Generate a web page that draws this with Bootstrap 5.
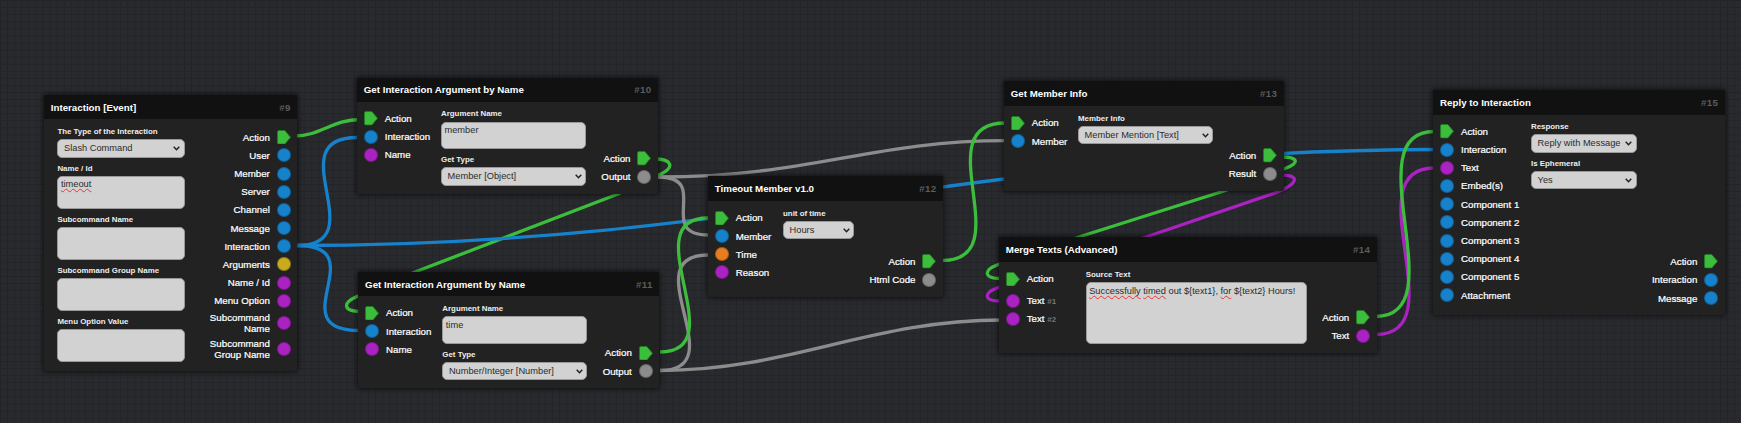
<!DOCTYPE html>
<html lang="en">
<head>
<meta charset="utf-8">
<meta name="viewport" content="width=device-width, initial-scale=1">
<title>Node editor</title>
<link href="https://cdn.jsdelivr.net/npm/bootstrap@5.3.0/dist/css/bootstrap.min.css" rel="stylesheet">
<style>
html,body{height:100%}
body{background:#28292d;font-family:"Liberation Sans",Arial,sans-serif;color:#fff;font-size:9.72px;line-height:11px}
.board{height:100vh;background-color:#292a2e;background-image:linear-gradient(to right,#232428 1px,transparent 1px),linear-gradient(to bottom,#232428 1px,transparent 1px);background-size:7.08px 7.08px}
.wires{left:0;top:0;fill:none;stroke-width:3.3}
.g{stroke:#3cbe3c}.b{stroke:#1682cb}.p{stroke:#aa22c2}.s{stroke:#8c8c8c}
.node{background:#222;border-radius:2px;box-shadow:0 0 5px 1px rgba(0,0,0,.6)}
.node-head{height:25px;background:#111;padding:0 6.5px 0 6.8px;font-weight:700}
.node-id{color:#5c5c5c;letter-spacing:.35px}
.node-body{padding:7.6px 0 8.2px}
.ins{padding-left:6.9px;flex:none}
.outs{padding-right:6.7px}
.sock{height:18.2px;gap:6.8px;white-space:nowrap;-webkit-text-stroke:.22px #fff}
.sock.tall{height:26.2px;text-align:right}
.port{width:14px;height:14px;border-radius:50%;border:1px solid rgba(0,0,0,.25);flex:none}
.blue{background:#1682cb}.purple{background:#aa22c2}.gray{background:#8c8c8c}.yellow{background:#c8ac1c}.orange{background:#e67e1e}
.flow{width:14px;height:14.6px;flex:none}
.idx{font-size:8px;color:#777;font-weight:700;-webkit-text-stroke:0}
.fields{gap:6px;flex:none}
.fields label{display:block;font-size:7.9px;line-height:9px;font-weight:700;margin-bottom:3.2px;color:#eee}
.pick,.entry{background:#d2d2d2;border:1px solid #999;border-radius:5px;color:#2b2b2b;font-size:9.28px;line-height:11px}
.pick{height:18.4px;padding:0 3.5px 0 5.6px}
.entry{height:33px;padding:2.6px 2.5px;white-space:nowrap}
.entry.short{height:27.6px}
.entry.large{height:62.4px}
.typo{text-decoration:underline wavy #e33 .7px;text-underline-offset:.5px;text-decoration-skip-ink:none}
#n9{left:44px;top:95.3px;width:253.3px;height:276px}
#n10{left:357px;top:78px;width:301px;height:116px}
#n11{left:358.3px;top:272px;width:301px;height:116.4px}
#n12{left:708px;top:176.2px;width:235px;height:120.6px}
#n13{left:1004px;top:81.3px;width:279.7px;height:109.7px}
#n14{left:999px;top:237.3px;width:377.7px;height:115.5px}
#n15{left:1433.3px;top:89.7px;width:291.5px;height:225.6px}
#n9 .node-body{padding-bottom:9px}
#n9 .ins{width:13.4px}#n9 .fields{width:127.6px}
#n10 .ins,#n11 .ins{width:84px}#n10 .fields,#n11 .fields{width:145px}
#n12 .ins{width:75px}#n12 .fields{width:71.4px}
#n13 .ins{width:74px}#n13 .fields{width:135.2px}
#n14 .ins{width:86.7px}#n14 .fields{width:221.3px}
#n15 .ins{width:97.7px}#n15 .fields{width:105.8px}
</style>
</head>
<body>
<svg width="0" height="0" class="position-absolute"><defs>
<symbol id="flow" viewBox="0 0 14 14.6"><path d="M.5 2Q.5.5 2 .5H7.8L13.5 7.3 7.8 14.1H2Q.5 14.1 .5 12.6Z" fill="#3cbe3c" stroke="#257a25" stroke-width="1"/></symbol>
<symbol id="chev" viewBox="0 0 7 5"><path d="M.7.8 3.5 3.7 6.3.8" fill="none" stroke="#222" stroke-width="1.5"/></symbol>
</defs></svg>
<main class="board position-relative overflow-hidden">
<svg class="wires position-absolute" width="1741" height="423">
<path class="g" d="M295 136C320 136 333 119.5 360 119.5"/>
<path class="b" d="M297 245.5C376 245.5 277 137.5 357 137.5"/>
<path class="b" d="M297 245.5C376 245.5 279 330.5 359 330.5"/>
<path class="g" d="M655 159C671 159 676 167 660 174.5L618 194 415 272 357 296.5C342 303 343 311.5 361 311.5"/>
<path class="b" d="M295 245.5C750 245.5 980 149.5 1440 149.5"/>
<path class="s" d="M658 177C713 177 654 235 709 235"/>
<path class="s" d="M658 177C810 177 870 140.7 1006 140.7"/>
<path class="s" d="M660 370.5C736 370.5 632 255 708 255"/>
<path class="g" d="M660 352C736 352 632 218 708 218"/>
<path class="s" d="M660 370.5C790 370.5 870 320 1002 320"/>
<path class="g" d="M942 260.5C1022 260.5 924 123 1005 123"/>
<path class="g" d="M1282 157C1297 157 1301 162.5 1285 168.5L1224 191 1082 236 997 265C984 270 983 278.5 1001 278.5"/>
<path class="p" d="M1282 175.2C1299 175.2 1300 183 1275 193L1149 236 997 288C984 293 983 301 1001 301"/>
<path class="p" d="M1376 334.5C1457 334.5 1353 168 1434 168"/>
<path class="g" d="M1376 316.5C1457 316.5 1353 131.5 1434 131.5"/>
</svg>
<div id="nodes"></div>
</main>
<script>
const NODES=[
 {id:9,title:"Interaction [Event]",ins:[],fields:[["The Type of the Interaction","pick","Slash Command"],["Name / Id","entry","<span class='typo'>timeout</span>"],["Subcommand Name","entry",""],["Subcommand Group Name","entry",""],["Menu Option Value","entry",""]],
  outs:[["Action","flow"],["User","blue"],["Member","blue"],["Server","blue"],["Channel","blue"],["Message","blue"],["Interaction","blue"],["Arguments","yellow"],["Name / Id","purple"],["Menu Option","purple"],["Subcommand<br>Name","purple"],["Subcommand<br>Group Name","purple"]]},
 {id:10,title:"Get Interaction Argument by Name",ins:[["Action","flow"],["Interaction","blue"],["Name","purple"]],fields:[["Argument Name","entry short","member"],["Get Type","pick","Member [Object]"]],outs:[["Action","flow"],["Output","gray"]]},
 {id:11,title:"Get Interaction Argument by Name",ins:[["Action","flow"],["Interaction","blue"],["Name","purple"]],fields:[["Argument Name","entry short","time"],["Get Type","pick","Number/Integer [Number]"]],outs:[["Action","flow"],["Output","gray"]]},
 {id:12,title:"Timeout Member v1.0",ins:[["Action","flow"],["Member","blue"],["Time","orange"],["Reason","purple"]],fields:[["unit of time","pick","Hours"]],outs:[["Action","flow"],["Html Code","gray"]]},
 {id:13,title:"Get Member Info",ins:[["Action","flow"],["Member","blue"]],fields:[["Member Info","pick","Member Mention [Text]"]],outs:[["Action","flow"],["Result","gray"]]},
 {id:14,title:"Merge Texts (Advanced)",ins:[["Action","flow","mb-1"],["Text <span class='idx'>#1</span>","purple"],["Text <span class='idx'>#2</span>","purple"]],fields:[["Source Text","entry large","<span class='typo'>Successfully</span> <span class='typo'>timed</span> out ${text1}, <span class='typo'>for</span> ${text2} Hours!"]],outs:[["Action","flow"],["Text","purple"]]},
 {id:15,title:"Reply to Interaction",ins:[["Action","flow"],["Interaction","blue"],["Text","purple"],["Embed(s)","blue"],["Component 1","blue"],["Component 2","blue"],["Component 3","blue"],["Component 4","blue"],["Component 5","blue"],["Attachment","blue"]],fields:[["Response","pick","Reply with Message"],["Is Ephemeral","pick","Yes"]],outs:[["Action","flow"],["Interaction","blue"],["Message","blue"]]}
];
const port=t=>t==="flow"?'<svg class="flow"><use href="#flow"/></svg>':`<span class="port ${t}"></span>`;
const field=([l,k,v])=>`<div><label>${l}</label><div class="${k}${k==="pick"?" d-flex align-items-center justify-content-between":""}">${k==="pick"?`<span>${v}</span><svg width="7" height="5"><use href="#chev"/></svg>`:v}</div></div>`;
document.getElementById("nodes").innerHTML=NODES.map(n=>`<section class="node position-absolute d-flex flex-column" id="n${n.id}">
<header class="node-head d-flex align-items-center justify-content-between"><span>${n.title}</span><span class="node-id">#${n.id}</span></header>
<div class="node-body d-flex flex-grow-1">
<div class="ins">${n.ins.map(([l,t,c])=>`<div class="sock d-flex align-items-center ${c||""}">${port(t)}<span>${l}</span></div>`).join("")}</div>
<div class="fields d-flex flex-column">${n.fields.map(field).join("")}</div>
<div class="outs ms-auto align-self-end">${n.outs.map(([l,t])=>`<div class="sock ${l.includes("<br>")?"tall ":""}d-flex align-items-center justify-content-end"><span>${l}</span>${port(t)}</div>`).join("")}</div>
</div></section>`).join("");
</script>
<script src="https://cdn.jsdelivr.net/npm/bootstrap@5.3.0/dist/js/bootstrap.bundle.min.js"></script>
</body>
</html>
